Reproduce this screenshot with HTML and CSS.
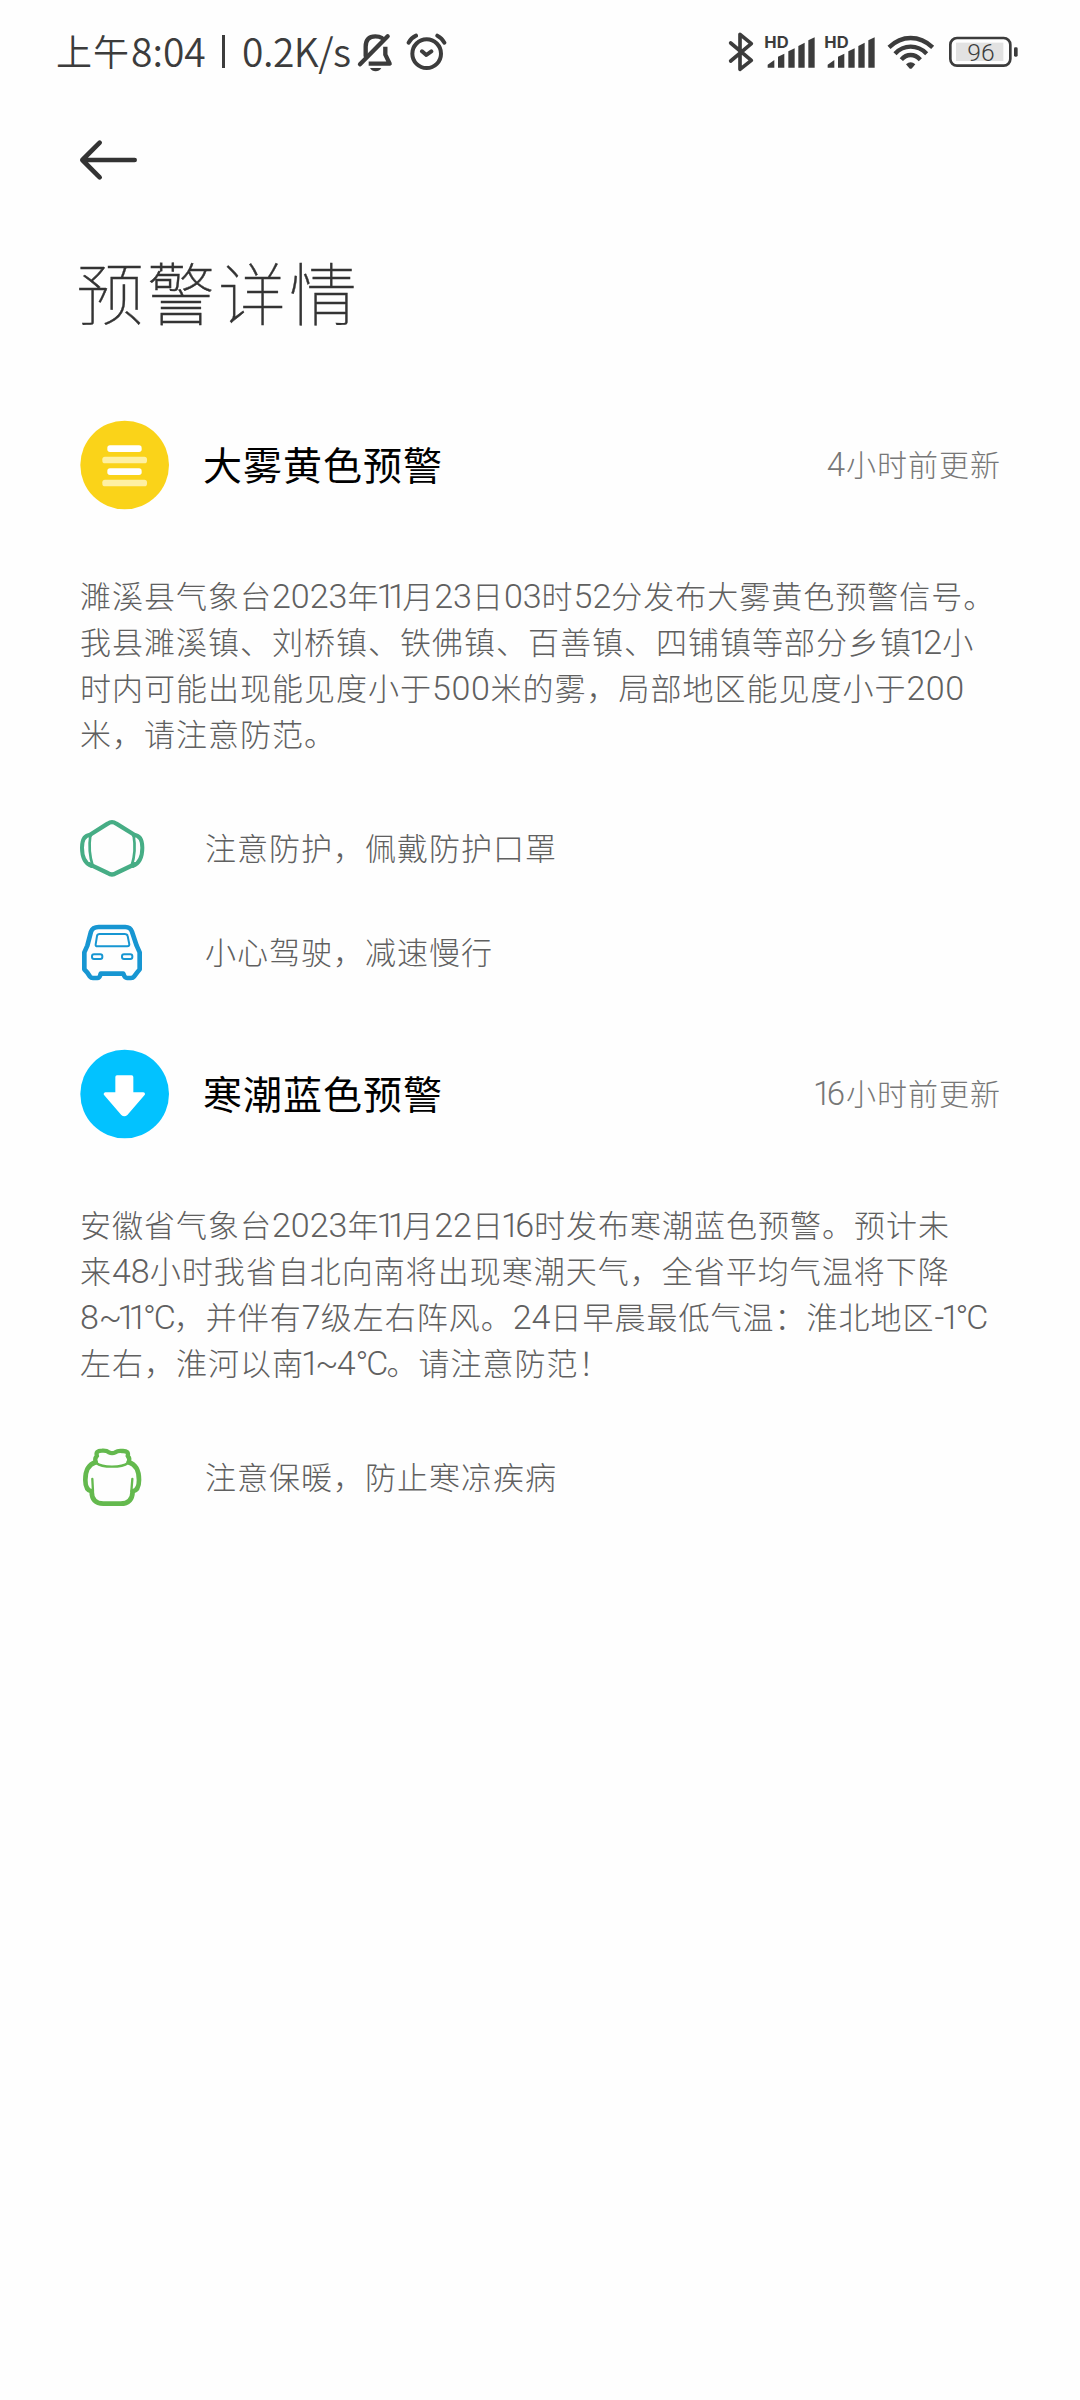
FILE: index.html
```html
<!DOCTYPE html>
<html lang="zh-CN">
<head>
<meta charset="utf-8">
<title>预警详情</title>
<link rel="stylesheet" href="styles.css">
</head>
<body>
<header class="status">
  <div class="clock"><span class="cjk">上午</span><span class="time">8:04</span><span class="bar"></span><span class="speed">0.2K/s</span></div>
  <svg class="bell" width="38" height="40" viewBox="948 36 114 120" fill="none" stroke="#3c3c3c" stroke-width="13" stroke-linecap="round" stroke-linejoin="round">
    <path d="M960 133 1043 49"/><path d="M977 108V80C977 58 988 49 1006 49Q1018 49 1026 54"/><path d="M1036 80V104L1049 131H986" stroke-linecap="butt"/><path d="M990 144H1024Q1018 154 1007 154T990 144Z" fill="#3c3c3c" stroke="none"/>
  </svg>
  <svg class="alarm" width="41" height="40" viewBox="1098 36 123 120" fill="none" stroke="#3c3c3c" stroke-width="12" stroke-linecap="round" stroke-linejoin="round">
    <circle cx="1160" cy="101" r="43"/><path d="M1146 94 1159 105 1174 94M1106 68Q1113 54 1128 47M1192 47Q1206 54 1213 68"/>
  </svg>
  <svg class="bt" width="26" height="40" viewBox="54 36 78 120" fill="none" stroke="#3c3c3c" stroke-width="11" stroke-linecap="round" stroke-linejoin="round">
    <path d="M62 69 124 121 90 148V43L124 71 62 123"/>
  </svg>
  <svg class="signal" width="52" height="40" viewBox="162 36 156 120" fill="#3c3c3c">
    <text class="hd" x="163" y="84" textLength="73" lengthAdjust="spacingAndGlyphs">HD</text>
    <path d="M173 134 193 120V143H173ZM204 110 223 101V143H204ZM235 94 254 85V143H235ZM265 78 284 68V143H265ZM295 61 314 52V143H295Z"/>
  </svg>
  <svg class="signal" width="52" height="40" viewBox="162 36 156 120" fill="#3c3c3c">
    <text class="hd" x="163" y="84" textLength="73" lengthAdjust="spacingAndGlyphs">HD</text>
    <path d="M173 134 193 120V143H173ZM204 110 223 101V143H204ZM235 94 254 85V143H235ZM265 78 284 68V143H265ZM295 61 314 52V143H295Z"/>
  </svg>
  <svg class="wifi" width="48" height="40" viewBox="531 36 144 120" fill="none" stroke="#3c3c3c" stroke-width="13">
    <path d="M537 82Q566 54 602 54T668 82M555 101Q575 80 602 80T650 101M574 119Q586 105 602 105T631 119"/><path d="M588 133Q602 120 616 133L606 145Q602 148 598 145Z" fill="#3c3c3c" stroke="none"/>
  </svg>
  <svg class="battery" width="71" height="40" viewBox="714 36 213 120">
    <rect x="738" y="68" width="142" height="55" fill="#e2e2e2"/><rect x="721" y="54" width="180" height="83" rx="20" fill="none" stroke="#3c3c3c" stroke-width="8"/><rect x="912" y="82" width="11" height="28" rx="4" fill="#3c3c3c"/>
    <text class="level" x="772" y="122" textLength="82" lengthAdjust="spacingAndGlyphs">96</text>
  </svg>
</header>

<nav class="nav">
  <svg width="60" height="42" viewBox="117 358 180 126" fill="none" stroke="#333" stroke-width="14" stroke-linecap="round" stroke-linejoin="round"><path d="M284 421H127M179 369 127 421 179 473"/></svg>
</nav>

<main class="page">
  <h1 class="title">预警详情</h1>

  <section class="alert">
    <div class="head">
      <svg class="badge" width="90" height="90" viewBox="0 0 270 270"><circle cx="137" cy="135" r="133" fill="#fad319"/><g fill="#fff"><rect x="85" y="76" width="103" height="20" rx="8"/><rect x="85" y="145" width="103" height="20" rx="8"/></g><g fill="#fef0a2"><rect x="70" y="110" width="134" height="20" rx="8"/><rect x="70" y="179" width="134" height="20" rx="8"/></g></svg>
      <h2>大雾黄色预警</h2>
      <span class="when"><b>4</b>小时前更新</span>
    </div>
    <p class="body">
      <span>濉溪县气象台<b>2023</b>年<i>11</i>月<b>23</b>日<b>03</b>时<b>52</b>分发布大雾黄色预警信号。</span>
      <span>我县濉溪镇、刘桥镇、铁佛镇、百善镇、四铺镇等部分乡镇<i>1</i><b>2</b>小</span>
      <span>时内可能出现能见度小于<b class="round">500</b>米的雾，局部地区能见度小于<b class="round">200</b></span>
      <span>米，请注意防范。</span>
    </p>
    <ul class="tips">
      <li>
        <svg width="66" height="66" viewBox="57 45 198 198" fill="none" stroke="#46ad85" stroke-linejoin="round" stroke-linecap="round"><path stroke-width="13" d="M89 105 143 71Q156 62 169 71L224 105M89 193 143 219Q156 228 169 219L224 193"/><path stroke-width="12" d="M91 105Q66 106 66 143 66 186 94 198M221 105Q247 106 247 143 247 186 219 198"/><path stroke-width="8" d="M91 107Q84 153 98 197M221 107Q229 153 215 197"/></svg>
        <span>注意防护，佩戴防护口罩</span>
      </li>
      <li>
        <svg width="66" height="66" viewBox="57 357 198 198" fill="none" stroke="#1796d2" stroke-linejoin="round"><path stroke-width="14" d="M116 381H196Q211 381 216 395L230 437 239 457V508L231 518 222 530Q219 534 213 534H201Q194 534 190 521H122Q119 534 112 534H99Q93 534 90 530L82 518 73 508V457L82 437 93 395Q98 381 116 381Z"/><path stroke-width="6" d="M119 402H193Q202 402 203 408L208 433Q208 439 202 439H112Q106 439 107 433L111 408Q112 402 119 402Z"/><rect stroke-width="6" x="96" y="463" width="31" height="14" rx="6"/><rect stroke-width="6" x="186" y="463" width="31" height="14" rx="6"/></svg>
        <span>小心驾驶，减速慢行</span>
      </li>
    </ul>
  </section>

  <section class="alert">
    <div class="head">
      <svg class="badge" width="90" height="90" viewBox="0 0 270 270"><circle cx="137" cy="135" r="133" fill="#02c2ff"/><path d="M114 84H158V135H193L142 194Q136 199 130 194L79 135H114Z" fill="#fff" stroke="#fff" stroke-width="10" stroke-linejoin="round"/></svg>
      <h2>寒潮蓝色预警</h2>
      <span class="when"><i>1</i><b>6</b>小时前更新</span>
    </div>
    <p class="body">
      <span>安徽省气象台<b>2023</b>年<i>11</i>月<b>22</b>日<i>1</i><b>6</b>时发布寒潮蓝色预警。预计未</span>
      <span>来<b>48</b>小时我省自北向南将出现寒潮天气，全省平均气温将下降</span>
      <span><b>8</b><b class="unit">~</b><i>11</i><b class="unit">°C</b>，并伴有<b>7</b>级左右阵风。<b>24</b>日早晨最低气温：淮北地区<b>-</b><i>1</i><b class="unit">°C</b></span>
      <span>左右，淮河以南<i>1</i><b class="unit">~</b><b>4</b><b class="unit">°C</b>。请注意防范！</span>
    </p>
    <ul class="tips">
      <li>
        <svg width="66" height="66" viewBox="57 42 198 198" fill="none" stroke="#64b94e" stroke-linejoin="round" stroke-linecap="round"><path stroke-width="14" d="M107 97Q76 106 76 150 76 181 95 184 95 221 130 221H182Q217 221 218 184 237 181 237 150 237 106 206 97"/><path stroke-width="13" d="M107 97Q103 83 111 78 105 62 126 62 140 61 147 67 156 72 166 67 174 61 187 63 208 62 203 78 211 85 206 97"/><path stroke-width="7" d="M109 99Q122 110 156 110T204 99"/><path stroke-width="7" d="M97 147 99 184M217 147 214 184"/></svg>
        <span>注意保暖，防止寒凉疾病</span>
      </li>
    </ul>
  </section>
</main>
</body>
</html>
```
FILE: styles.css
```css
* { box-sizing: border-box; margin: 0; padding: 0; }
body {
  width: 1080px;
  min-height: 2400px;
  background: #fefefe;
  font-family: "Noto Sans CJK SC", sans-serif;
  font-weight: 300;
  color: #333;
}
svg { display: block; flex: none; }
b, i { font-style: normal; font-weight: 300; font-family: Roboto, "Noto Sans CJK SC", sans-serif; }

.status { display: flex; align-items: center; height: 104px; padding-left: 56px; }
.clock { display: flex; align-items: center; width: 300px; padding-bottom: 4px; line-height: 48px; white-space: nowrap; color: #3c3c3c; font-weight: 350; }
.cjk { width: 75px; font-size: 36px; letter-spacing: 1px; }
.time { width: 91px; font-size: 39px; }
.bar { width: 3px; height: 33px; margin: 3px 17px 0 0; background: #3c3c3c; }
.speed { font-size: 39px; letter-spacing: -0.5px; }
.alarm { margin-left: 12px; }
.bt { margin-left: 281px; }
.signal { margin-left: 10px; }
.signal + .signal { margin-left: 8px; }
.wifi { margin-left: 11px; }
.battery { margin-left: 13px; }
.hd { font: 700 47px Inter, sans-serif; }
.level { font: 300 70px Roboto, sans-serif; fill: #3c3c3c; }

.nav { height: 112px; padding: 35px 0 0 79px; }

.page { padding: 0 79px; }
.title { height: 204px; margin-left: -3px; padding-top: 25px; font-size: 68px; font-weight: 100; line-height: 100px; letter-spacing: 3px; white-space: nowrap; -webkit-text-stroke: 0.4px #333; }

.head { display: flex; align-items: center; height: 90px; }
.head h2 { margin-left: 34px; padding-bottom: 4px; font-size: 39px; font-weight: 400; line-height: 60px; letter-spacing: 1px; color: #000; }
.when { margin-left: auto; padding-bottom: 2px; font-size: 30px; line-height: 44px; letter-spacing: 1px; color: #777; }
.when b, .when i { font-size: 33px; }

.body { margin-top: 62px; padding: 0 0 2px 1px; color: #606060; }
.body > span { display: block; height: 46px; font-size: 31px; line-height: 46px; letter-spacing: 1px; white-space: nowrap; }
.body b, .body i { font-size: 34px; line-height: 40px; letter-spacing: 0; }
.body i, .when i { margin: 0 3px 0 -3px; letter-spacing: -7.5px; }
.body .round { letter-spacing: 0.6px; }
.body .unit { letter-spacing: -2px; }

.tips { margin-top: 38px; list-style: none; }
.tips li { display: flex; align-items: center; height: 104px; font-size: 31px; letter-spacing: 1px; color: #606060; }
.tips span { margin-left: 60px; padding-bottom: 4px; }
.alert + .alert { margin-top: 45px; }
```
